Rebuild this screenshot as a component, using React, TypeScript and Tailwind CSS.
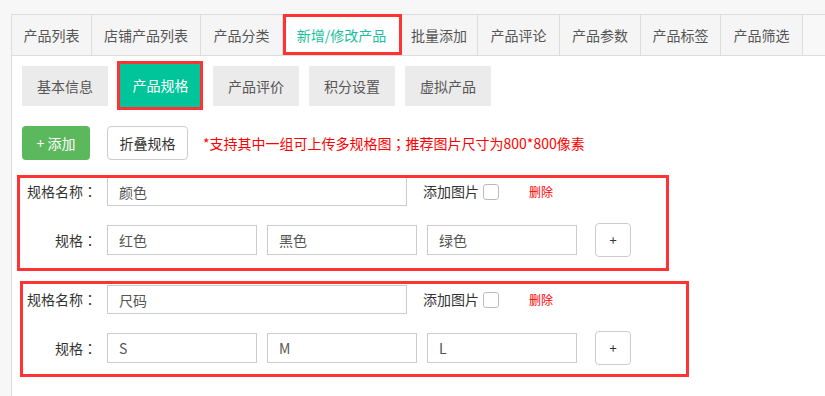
import React from "react";

const tabs: { label: string; w: string; active?: boolean }[] = [
  { label: "产品列表", w: "w-[80px]" },
  { label: "店铺产品列表", w: "w-[109px]" },
  { label: "产品分类", w: "w-[82px]" },
  { label: "新增/修改产品", w: "w-[118px]", active: true },
  { label: "批量添加", w: "w-[77px]" },
  { label: "产品评论", w: "w-[82px]" },
  { label: "产品参数", w: "w-[81px]" },
  { label: "产品标签", w: "w-[80px]" },
  { label: "产品筛选", w: "w-[82px]" },
];

const subTabs = ["基本信息", "产品规格", "产品评价", "积分设置", "虚拟产品"];

function Colon({ ch }: { ch: string }) {
  return <span className="font-['Noto_Sans_CJK_TC',sans-serif]">{ch}</span>;
}

function SpecGroup({ name, values, className }: { name: string; values: string[]; className?: string }) {
  return (
    <div className={className}>
      <div className="flex items-center h-[29px]">
        <div className="w-[75px] text-right whitespace-nowrap text-[14px] text-[#333]">
          规格名称<Colon ch="：" />
        </div>
        <input
          readOnly
          defaultValue={name}
          className="ml-[10px] w-[300px] h-[29px] border border-[#ccc] px-[11px] text-[14px] text-[#555] outline-none"
        />
        <span className="ml-[16px] text-[14px] text-[#333]">添加图片</span>
        <span className="ml-[4px] w-[16px] h-[16px] border border-[#bbb] rounded-[3px] bg-white" />
        <span className="ml-[30px] text-[12px] text-[#f00]">删除</span>
      </div>
      <div className="flex items-center mt-[17px]">
        <div className="w-[75px] text-right whitespace-nowrap text-[14px] text-[#333]">
          规格<Colon ch="：" />
        </div>
        <div className="ml-[10px] flex gap-[10px]">
          {values.map((v) => (
            <input
              key={v}
              readOnly
              defaultValue={v}
              className="w-[150px] h-[30px] border border-[#ccc] px-[11px] text-[14px] text-[#555] outline-none"
            />
          ))}
        </div>
        <button className="ml-[18px] w-[36px] h-[34px] border border-[#ccc] rounded-[4px] bg-white text-[13px] text-[#333] flex items-center justify-center">
          +
        </button>
      </div>
    </div>
  );
}

export default function App() {
  return (
    <div className="relative w-[825px] h-[396px] overflow-hidden bg-[#f7f7f7] pt-[14px] pl-[11px] font-['Noto_Sans_CJK_SC','Microsoft_YaHei',sans-serif]">
      <div className="h-full bg-white border-l border-t border-[#ddd]">
        <div className="flex h-[41px] border-b border-[#ddd] bg-[#f8f8f8]">
          {tabs.map((t) => (
            <div
              key={t.label}
              className={`${t.w} h-full border-r border-[#ddd] flex items-center justify-center text-[14px] whitespace-nowrap ${
                t.active ? "bg-white text-[#1bbf9c]" : "bg-[#f5f5f5] text-[#555]"
              }`}
            >
              {t.label}
            </div>
          ))}
        </div>
        <div className="pt-[8px] pl-[10px]">
          <div className="flex items-start gap-[10px]">
            {subTabs.map((s, i) =>
              i === 1 ? (
                <div
                  key={s}
                  className="relative w-[85px] h-[43px] bg-[#00c49a] text-white text-[14px] flex items-center justify-center"
                >
                  {s}
                  <span className="absolute left-1/2 top-full -ml-[3px] w-0 h-0 border-l-[3px] border-r-[3px] border-t-[3px] border-l-transparent border-r-transparent border-t-[#00c49a]" />
                </div>
              ) : (
                <div
                  key={s}
                  className="mt-[2px] w-[86px] h-[40px] bg-[#ebebeb] text-[#555] text-[14px] flex items-center justify-center"
                >
                  {s}
                </div>
              )
            )}
          </div>
          <div className="mt-[19px] flex items-center h-[34px]">
            <button className="w-[68px] h-[34px] rounded-[4px] bg-[#5cb85c] text-white text-[14px]">+ 添加</button>
            <button className="ml-[17px] w-[81px] h-[34px] rounded-[4px] border border-[#ccc] bg-white text-[#333] text-[14px]">
              折叠规格
            </button>
            <span className="ml-[15px] text-[14px] text-[#f00] whitespace-nowrap">
              *支持其中一组可上传多规格图<Colon ch="；" />推荐图片尺寸为800*800像素
            </span>
          </div>
          <SpecGroup className="mt-[17px]" name="颜色" values={["红色", "黑色", "绿色"]} />
          <SpecGroup className="mt-[28px]" name="尺码" values={["S", "M", "L"]} />
        </div>
      </div>

      <div className="pointer-events-none absolute left-[283px] top-[14px] w-[119px] h-[41px] border-[3px] border-[#f33]" />
      <div className="pointer-events-none absolute left-[117px] top-[61px] w-[86px] h-[49px] border-[3px] border-[#f33]" />
      <div className="pointer-events-none absolute left-[17px] top-[175px] w-[652px] h-[96px] border-[3px] border-[#f33]" />
      <div className="pointer-events-none absolute left-[20px] top-[281px] w-[669px] h-[96px] border-[3px] border-[#f33]" />
    </div>
  );
}
